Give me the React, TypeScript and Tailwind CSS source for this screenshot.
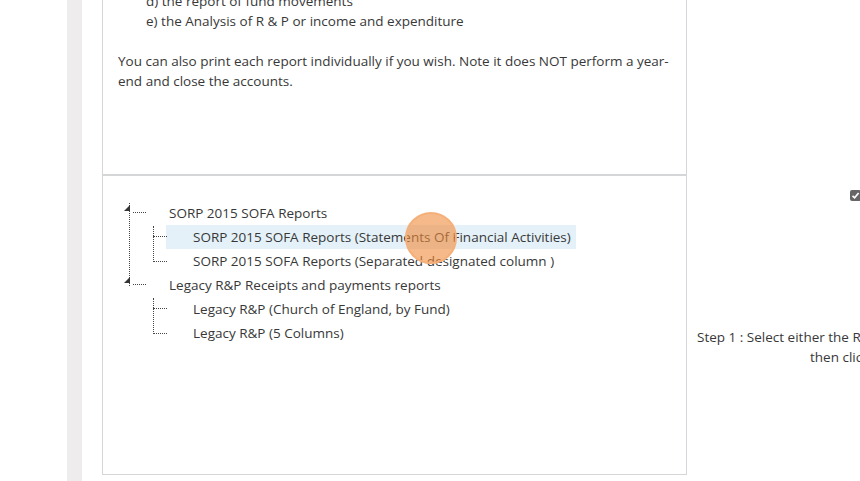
import React from "react";

const font = { fontFamily: '"Open Sans", "Noto Sans", sans-serif' };

function Dotted({ className }: { className: string }) {
  return <div className={"absolute border-[#444] border-dotted " + className} />;
}

export default function App() {
  return (
    <div
      className="w-[860px] h-[481px] overflow-hidden bg-white flex text-[13.5px] text-[#383838] leading-[20px]"
      style={font}
    >
      <div className="w-[67px] shrink-0" />
      <div className="w-[15px] shrink-0 bg-[#eeecec]" />
      <div className="w-[20px] shrink-0" />
      {/* panel */}
      <div className="w-[585px] shrink-0 flex flex-col">
        <div className="h-[174px] border-x border-[#d4d6d8] pl-[15px] pr-[10px] overflow-hidden">
          <div className="-mt-[9px] pl-[28px]">
            <div>d) the report of fund movements</div>
            <div>e) the Analysis of R &amp; P or income and expenditure</div>
          </div>
          <div className="h-[20px]" />
          <p>
            You can also print each report individually if you wish. Note it does NOT perform a year-end
            and close the accounts.
          </p>
        </div>
        <div className="h-[2px] bg-[#d4d6d8]" />
        <div className="h-[299px] border-x border-b border-[#d4d6d8] relative">
          {/* tree lines */}
          <Dotted className="left-[26px] top-[27px] h-[83px] border-l" />
          <Dotted className="left-[30px] top-[36px] w-[13px] border-t" />
          <Dotted className="left-[30px] top-[108px] w-[13px] border-t" />
          <Dotted className="left-[50px] top-[50px] h-[36px] border-l" />
          <Dotted className="left-[50px] top-[60px] w-[14px] border-t" />
          <Dotted className="left-[50px] top-[85px] w-[14px] border-t" />
          <Dotted className="left-[50px] top-[122px] h-[36px] border-l" />
          <Dotted className="left-[50px] top-[132px] w-[14px] border-t" />
          <Dotted className="left-[50px] top-[157px] w-[14px] border-t" />
          <div className="pt-[25px] flex flex-col whitespace-nowrap">
            <div className="h-[24px] flex items-center pl-[66px]">SORP 2015 SOFA Reports</div>
            <div className="h-[24px] flex items-center ml-[63px] pl-[27px] w-[410px] bg-[#e5f1f9]">
              SORP 2015 SOFA Reports (Statements Of Financial Activities)
            </div>
            <div className="h-[24px] flex items-center pl-[90px]">
              SORP 2015 SOFA Reports (Separated designated column )
            </div>
            <div className="h-[24px] flex items-center pl-[66px]">Legacy R&amp;P Receipts and payments reports</div>
            <div className="h-[24px] flex items-center pl-[90px]">Legacy R&amp;P (Church of England, by Fund)</div>
            <div className="h-[24px] flex items-center pl-[90px]">Legacy R&amp;P (5 Columns)</div>
          </div>
          <svg className="absolute" style={{ left: 19, top: 27 }} width="10" height="90">
            <polygon points="8,2 8,8 2,8" fill="#333" />
            <polygon points="8,74 8,80 2,80" fill="#333" />
          </svg>
          <div className="absolute left-[302px] top-[36px] w-[52px] h-[52px] rounded-full bg-[#f08a3a]/60 border-2 border-[#f5b07a]" />
        </div>
      </div>
      {/* right column */}
      <div className="w-[400px] shrink-0 pl-[10px] flex flex-col">
        <div className="h-[189px]" />
        <div className="flex items-center pl-[153px] h-[12px]">
          <div className="w-[11px] h-[11px] rounded-[2px] bg-[#666] flex items-center justify-center">
            <svg width="9" height="9" viewBox="0 0 9 9">
              <path d="M1.5 4.8 L3.6 6.8 L7.6 2" stroke="white" strokeWidth="1.7" fill="none" />
            </svg>
          </div>
          <span className="ml-[6px] whitespace-nowrap">Select all reports</span>
        </div>
        <div className="h-[126px]" />
        <div className="w-[368px] text-center whitespace-nowrap">
          Step 1 : Select either the Report set or an individual report,
          <br />
          then click Next button.
        </div>
      </div>
    </div>
  );
}
